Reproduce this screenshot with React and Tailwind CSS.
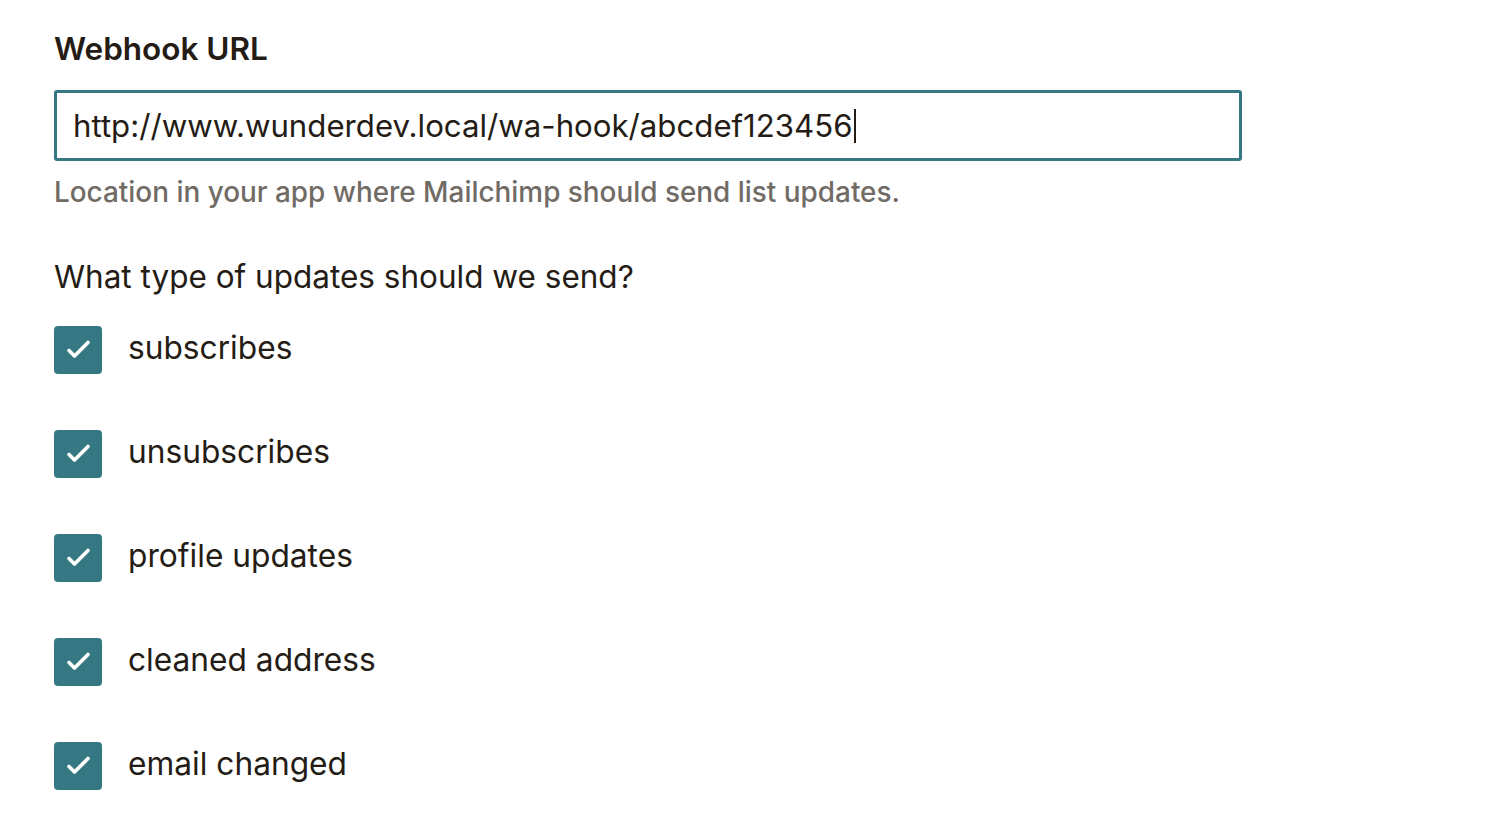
import React from "react";

const items = ["subscribes", "unsubscribes", "profile updates", "cleaned address", "email changed"];

function Check() {
  return (
    <div className="flex h-[48px] w-[48px] shrink-0 items-center justify-center rounded-[4px] bg-[#357884]">
      <svg width="48" height="48" viewBox="0 0 48 48" fill="none">
        <path d="M15 24.5 L20.5 30 L34 16.5" stroke="white" strokeWidth="3.6" strokeLinecap="round" strokeLinejoin="round" />
      </svg>
    </div>
  );
}

export default function App() {
  return (
    <div className="min-h-screen bg-white pl-[54px] pt-[29px] text-[#241c15]" style={{ fontFamily: "Inter, 'Noto Sans', sans-serif" }}>
      <div className="text-[31.5px] font-semibold leading-[40px]">Webhook URL</div>
      <div className="mt-[21px] flex h-[71px] w-[1188px] items-center rounded-[3px] border-[3px] border-[#357884] pl-[16px]">
        <span className="text-[31.2px] leading-[40px]">http://www.wunderdev.local/wa-hook/abcdef123456</span>
        <span className="ml-[1px] h-[34px] w-[2px] bg-[#241c15]"></span>
      </div>
      <div className="mt-[13px] text-[27.9px] font-medium leading-[36px] text-[#716b66]">Location in your app where Mailchimp should send list updates.</div>
      <div className="mt-[47px] text-[31.5px] leading-[40px]">What type of updates should we send?</div>
      <div className="mt-[29px] flex flex-col gap-[56px]">
        {items.map((t) => (
          <div key={t} className="flex items-center gap-[26px]">
            <Check />
            <span className="pb-[4px] text-[31.7px] leading-[40px]">{t}</span>
          </div>
        ))}
      </div>
    </div>
  );
}
